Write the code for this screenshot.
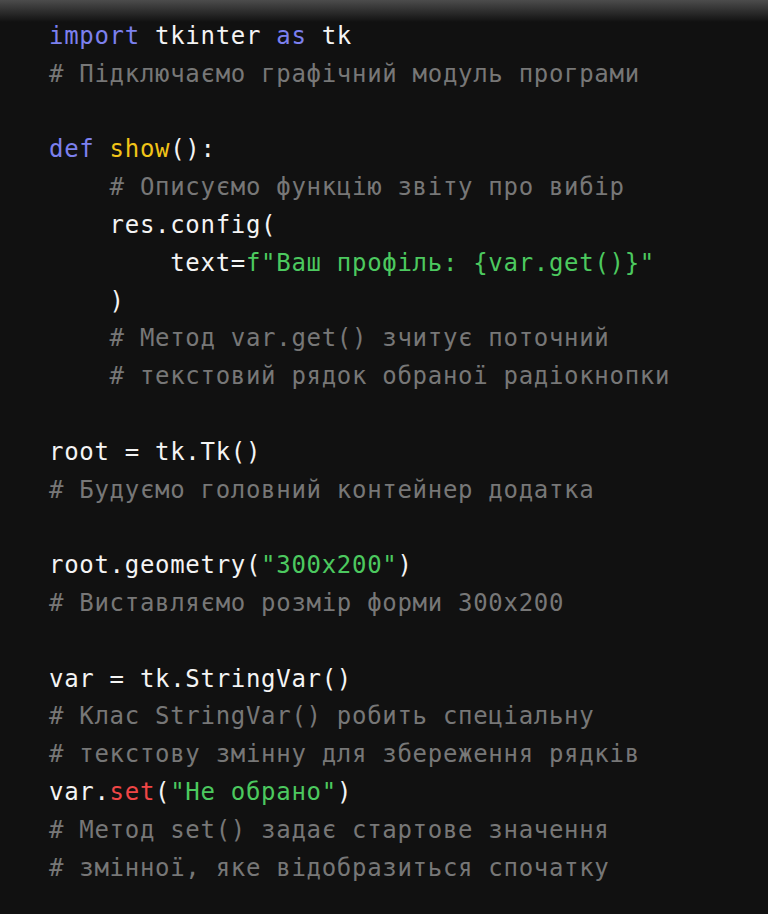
const kw = "text-[#7c80ee]";
const fn = "text-[#f2c418]";
const str = "text-[#4cc95f]";
const red = "text-[#ef4646]";
const cm = "text-[#777777]";

type Tok = [string, string?];

const lines: Tok[][] = [
  [["import", kw], [" tkinter "], ["as", kw], [" tk"]],
  [["# Підключаємо графічний модуль програми", cm]],
  [],
  [["def", kw], [" "], ["show", fn], ["():"]],
  [["    # Описуємо функцію звіту про вибір", cm]],
  [["    res.config("]],
  [["        text="], ['f"Ваш профіль: {var.get()}"', str]],
  [["    )"]],
  [["    # Метод var.get() зчитує поточний", cm]],
  [["    # текстовий рядок обраної радіокнопки", cm]],
  [],
  [["root = tk.Tk()"]],
  [["# Будуємо головний контейнер додатка", cm]],
  [],
  [["root.geometry("], ['"300x200"', str], [")"]],
  [["# Виставляємо розмір форми 300x200", cm]],
  [],
  [["var = tk.StringVar()"]],
  [["# Клас StringVar() робить спеціальну", cm]],
  [["# текстову змінну для збереження рядків", cm]],
  [["var."], ["set", red], ["("], ['"Не обрано"', str], [")"]],
  [["# Метод set() задає стартове значення", cm]],
  [["# змінної, яке відобразиться спочатку", cm]],
];

export default function App() {
  return (
    <div className="min-h-[914px] w-full bg-[#111111] bg-[linear-gradient(to_bottom,#4c4c4c_0px,#111111_22px)]">
      <pre className="pt-[18px] pl-[49px] font-['DejaVu_Sans_Mono','Liberation_Mono',monospace] text-[24px] tracking-[0.7px] leading-[37.8px] text-[#f4f4f4] whitespace-pre">
        {lines.map((line, i) => (
          <div key={i} className="h-[37.8px]">
            {line.map(([t, c], j) => (
              <span key={j} className={c}>
                {t}
              </span>
            ))}
          </div>
        ))}
      </pre>
    </div>
  );
}
